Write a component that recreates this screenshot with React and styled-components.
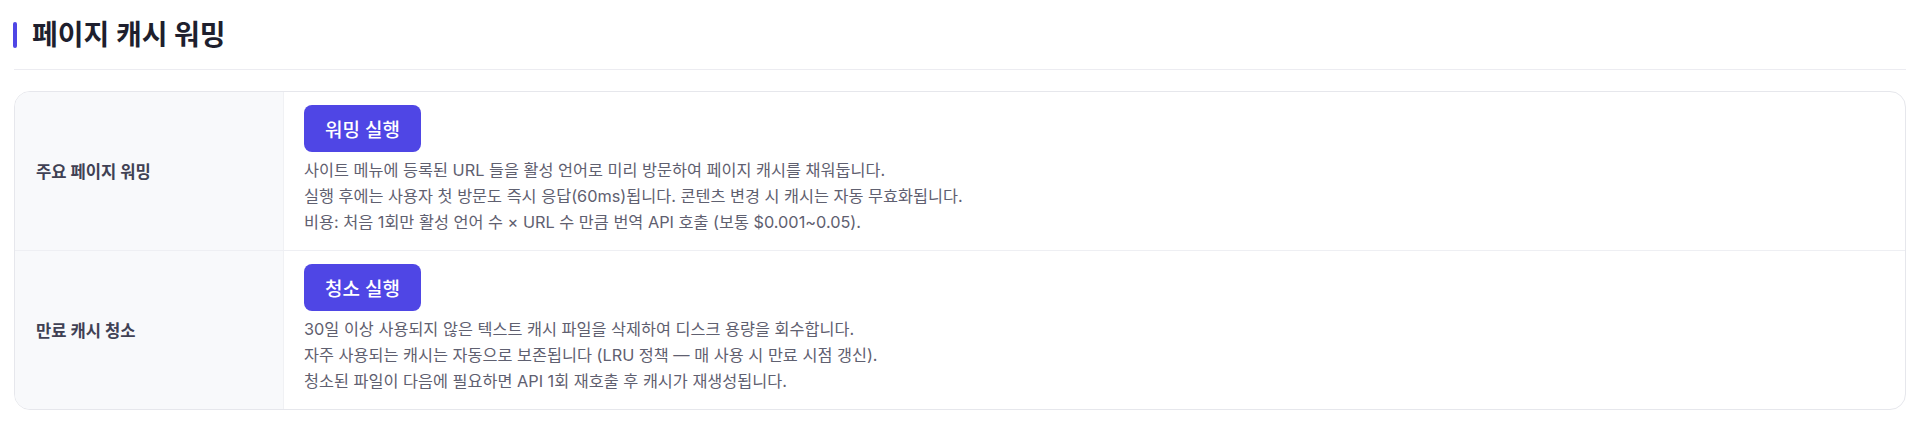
import React from "react";
import styled, { createGlobalStyle } from "styled-components";

const GlobalStyle = createGlobalStyle`
  * {
    box-sizing: border-box;
  }
  body {
    margin: 0;
    background: #ffffff;
    font-family: Inter, "Noto Sans CJK KR", sans-serif;
    color: #1f2030;
  }
`;

const tasks = [
  {
    id: "warm",
    label: "주요 페이지 워밍",
    action: "워밍 실행",
    lines: [
      "사이트 메뉴에 등록된 URL 들을 활성 언어로 미리 방문하여 페이지 캐시를 채워둡니다.",
      "실행 후에는 사용자 첫 방문도 즉시 응답(60ms)됩니다. 콘텐츠 변경 시 캐시는 자동 무효화됩니다.",
      "비용: 처음 1회만 활성 언어 수 × URL 수 만큼 번역 API 호출 (보통 $0.001~0.05).",
    ],
  },
  {
    id: "purge",
    label: "만료 캐시 청소",
    action: "청소 실행",
    lines: [
      "30일 이상 사용되지 않은 텍스트 캐시 파일을 삭제하여 디스크 용량을 회수합니다.",
      "자주 사용되는 캐시는 자동으로 보존됩니다 (LRU 정책 — 매 사용 시 만료 시점 갱신).",
      "청소된 파일이 다음에 필요하면 API 1회 재호출 후 캐시가 재생성됩니다.",
    ],
  },
];

export default function App() {
  return (
    <>
      <GlobalStyle />
      <Page>
        <Header>
          <Accent />
          <Title>페이지 캐시 워밍</Title>
        </Header>
        <Card>
          {tasks.map((task, index) => (
            <Row key={task.id} first={index === 0}>
              <Label>{task.label}</Label>
              <Body>
                <RunButton type="button">{task.action}</RunButton>
                <Desc>
                  {task.lines.map((line) => (
                    <div key={line}>{line}</div>
                  ))}
                </Desc>
              </Body>
            </Row>
          ))}
        </Card>
      </Page>
    </>
  );
}

const Page = styled.div`
  padding: 14px 14px;
`;

const Header = styled.div`
  display: flex;
  align-items: center;
  gap: 15px;
  padding: 2px 0 15px;
  border-bottom: 1px solid #ececf1;
  margin-bottom: 21px;
`;

const Accent = styled.span`
  width: 4px;
  height: 26px;
  border-radius: 2px;
  background: #4f46e5;
  margin-left: -1px;
`;

const Title = styled.h2`
  margin: 0;
  font-size: 28px;
  line-height: 38px;
  font-weight: 700;
  color: #1e1f2e;
`;

const Card = styled.div`
  border: 1px solid #e6e7ec;
  border-radius: 16px;
  overflow: hidden;
`;

const Row = styled.div`
  display: grid;
  grid-template-columns: 269px 1fr;
  border-top: ${(p) => (p.first ? "none" : "1px solid #eeeff3")};
`;

const Label = styled.div`
  display: flex;
  align-items: center;
  padding: 0 21px;
  background: #f8f9fb;
  border-right: 1px solid #f0f1f4;
  font-size: 16.6px;
  font-weight: 700;
  color: #404154;
`;

const Body = styled.div`
  padding: 13px 20px 15px;
  display: flex;
  flex-direction: column;
  align-items: flex-start;
  gap: 5px;
`;

const RunButton = styled.button`
  height: 47px;
  padding: 0 21px;
  border: none;
  border-radius: 8px;
  background: #4f46e5;
  color: #ffffff;
  font-family: inherit;
  font-size: 19px;
  font-weight: 500;
  cursor: pointer;
`;

const Desc = styled.div`
  font-size: 16.3px;
  line-height: 26px;
  color: #5f6070;
`;
